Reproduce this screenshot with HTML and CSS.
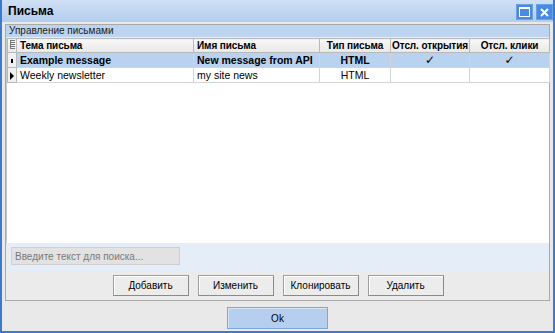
FILE: index.html
```html
<!DOCTYPE html>
<html lang="ru">
<head>
    <meta charset="UTF-8">
    <title>Письма</title>
    <link rel="stylesheet" href="styles.css">
</head>
<body>
    <div class="window">
        <div class="titlebar">
            <span class="title">Письма</span>
            <div class="title-buttons">
                <span class="tbtn">
                    <svg width="11" height="10" viewBox="0 0 11 10"><rect x="0.5" y="0.5" width="10" height="9" fill="none" stroke="#fff"/><rect x="0" y="0" width="11" height="2" fill="#fff"/></svg>
                </span>
                <span class="tbtn">
                    <svg width="9" height="9" viewBox="0 0 9 9"><path d="M1 1 L8 8 M8 1 L1 8" stroke="#fff" stroke-width="2"/></svg>
                </span>
            </div>
        </div>

        <div class="content">
            <div class="group">
                <div class="group-header">Управление письмами</div>

                <div class="grid">
                    <table class="grid-table">
                        <colgroup>
                            <col class="c-ind">
                            <col class="c-subject">
                            <col class="c-name">
                            <col class="c-type">
                            <col class="c-open">
                            <col class="c-click">
                        </colgroup>
                        <thead>
                            <tr>
                                <th class="ind">
                                    <svg width="5" height="9" viewBox="0 0 5 9"><path d="M0 0.5h5M0 2.5h5M0 4.5h5M0 6.5h5M0 8.5h5" stroke="#777"/><path d="M0.5 0v9" stroke="#777"/></svg>
                                </th>
                                <th>Тема письма</th>
                                <th>Имя письма</th>
                                <th class="center">Тип письма</th>
                                <th class="center">Отсл. открытия</th>
                                <th class="center">Отсл. клики</th>
                            </tr>
                        </thead>
                        <tbody>
                            <tr class="selected">
                                <td class="ind"><span class="dot"></span></td>
                                <td>Example message</td>
                                <td>New message from API</td>
                                <td class="center">HTML</td>
                                <td class="center check">✓</td>
                                <td class="center check">✓</td>
                            </tr>
                            <tr>
                                <td class="ind"><span class="arrow"></span></td>
                                <td>Weekly newsletter</td>
                                <td>my site news</td>
                                <td class="center">HTML</td>
                                <td></td>
                                <td></td>
                            </tr>
                        </tbody>
                    </table>
                </div>

                <div class="search-panel">
                    <input class="search" type="text" placeholder="Введите текст для поиска...">
                </div>

                <div class="actions">
                    <button class="btn">Добавить</button>
                    <button class="btn">Изменить</button>
                    <button class="btn">Клонировать</button>
                    <button class="btn">Удалить</button>
                </div>
            </div>

            <div class="footer">
                <button class="btn btn-ok">Ok</button>
            </div>
        </div>
    </div>
</body>
</html>
```

FILE: styles.css
```css
/* Basic reset */
body, html {
    margin: 0;
    padding: 0;
    width: 100%;
    height: 100%;
    overflow: hidden;
    background-color: #ffffff;
    font-family: 'Liberation Sans', 'DejaVu Sans', Arial, sans-serif;
    font-size: 10.5px;
    color: #000000;
}

/* Dialog window */
.window {
    width: 555px;
    height: 333px;
    box-sizing: border-box;
    border: 2px solid #3a7bd2;
    border-top: none;
    background-color: #e9e9e9;
    display: flex;
    flex-direction: column;
}

.titlebar {
    height: 22px;
    flex: none;
    display: flex;
    align-items: center;
    justify-content: space-between;
    padding: 0 0 0 6px;
    background: linear-gradient(to bottom, #cfe0f5, #b3cdee);
}

.title {
    font-size: 12px;
    font-weight: bold;
    color: #000000;
}

.title-buttons {
    display: flex;
    gap: 3px;
    align-self: flex-start;
    margin-top: 4px;
}

.tbtn {
    width: 17px;
    height: 16px;
    background-color: #4a8ae0;
    border: 1px solid #6aa0e6;
    box-sizing: border-box;
    display: flex;
    align-items: center;
    justify-content: center;
}

.content {
    flex: 1;
    display: flex;
    flex-direction: column;
    padding: 2px 3px 0 3px;
}

/* Group box */
.group {
    height: 277px;
    box-sizing: border-box;
    border: 1px solid #a9a9a9;
    display: flex;
    flex-direction: column;
    background-color: #ebebeb;
}

.group-header {
    height: 12px;
    line-height: 12px;
    padding-left: 3px;
    font-size: 10px;
    background-color: #bcd4f0;
    color: #1a1a1a;
}

/* Grid */
.grid {
    flex: 1;
    background-color: #ffffff;
    margin: 1px 0 0 0;
    border-left: 1px solid #c8c8c8;
}

.grid-table {
    width: 542px;
    border-collapse: collapse;
    table-layout: fixed;
}

.c-ind { width: 9px; }
.c-subject { width: 177px; }
.c-name { width: 126px; }
.c-type { width: 71px; }
.c-open { width: 79px; }
.c-click { width: 80px; }

.grid-table th,
.grid-table td {
    height: 14px;
    padding: 0 3px;
    white-space: nowrap;
    overflow: hidden;
    text-align: left;
    border: 1px solid #d4d4d4;
}

.grid-table th {
    height: 13px;
    font-weight: bold;
    font-size: 10px;
    letter-spacing: -0.1px;
    background: linear-gradient(to bottom, #f7f7f7, #e8e8e8);
    border-color: #b9b9b9;
}

.grid-table th.center {
    padding: 0 1px;
}

.grid-table .center {
    text-align: center;
}

.grid-table .check {
    font-size: 12px;
    line-height: 12px;
}

.grid-table .ind {
    padding: 0;
    text-align: center;
    border-color: #b9b9b9;
    background-color: #f0f0f0;
}

.grid-table tr.selected td {
    background-color: #b9d2f0;
    font-weight: bold;
}

.grid-table tr.selected td.ind {
    background-color: #f0f0f0;
}

.dot {
    display: inline-block;
    width: 2px;
    height: 4px;
    background-color: #000000;
    vertical-align: middle;
}

.arrow {
    display: inline-block;
    width: 0;
    height: 0;
    border-top: 4px solid transparent;
    border-bottom: 4px solid transparent;
    border-left: 4px solid #000000;
    vertical-align: middle;
}

/* Search panel */
.search-panel {
    height: 28px;
    box-sizing: border-box;
    padding: 4px 0 0 4px;
    background-color: #e5edf8;
    margin-left: 1px;
}

.search {
    width: 169px;
    height: 18px;
    box-sizing: border-box;
    border: 1px solid #cfcfcf;
    background-color: #e2e2e2;
    padding: 0 3px;
    font-family: inherit;
    font-size: 10px;
    outline: none;
}

.search::placeholder {
    color: #7a7a7a;
}

/* Buttons */
.actions {
    flex: none;
    height: 29px;
    display: flex;
    justify-content: center;
    align-items: center;
    gap: 9px;
    padding-left: 1px;
}

.btn {
    width: 76px;
    height: 21px;
    box-sizing: border-box;
    border: 1px solid #9e9e9e;
    border-right-color: #8a8a8a;
    border-bottom-color: #8a8a8a;
    background-color: #ececec;
    box-shadow: inset 1px 1px 0 #ffffff;
    font-family: inherit;
    font-size: 10px;
    color: #000000;
    padding: 0;
}

.footer {
    flex: 1;
    display: flex;
    justify-content: center;
    align-items: flex-start;
    padding-top: 6px;
}

.btn-ok {
    width: 101px;
    height: 22px;
    background-color: #b7cfee;
    border: 1px solid #7ea7da;
    box-shadow: inset 1px 1px 0 #d6e4f7;
}
```
